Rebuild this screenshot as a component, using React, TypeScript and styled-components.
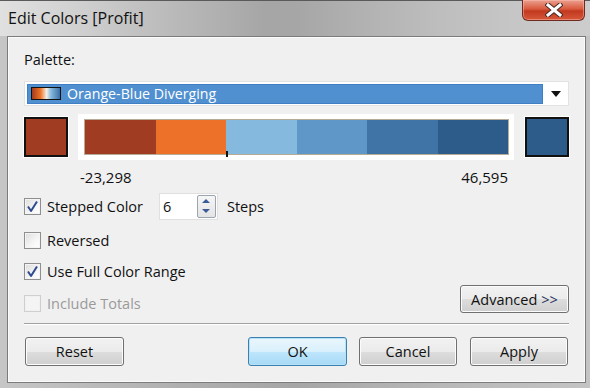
import React from "react";
import styled, { createGlobalStyle } from "styled-components";

const Global = createGlobalStyle`
  html, body { margin: 0; padding: 0; }
  body { width: 590px; height: 388px; overflow: hidden; font-family: "Open Sans", "Noto Sans", sans-serif; }
`;

const Window = styled.div`
  width: 590px;
  height: 388px;
  box-sizing: border-box;
  display: flex;
  flex-direction: column;
  background: linear-gradient(90deg, #c6c6c6 0%, #b0b0b0 30%, #a6a6a6 50%, #b8b8b8 75%, #c4c4c4 100%);
  border-top: 1px solid #5a5a5a;
`;

const TitleBar = styled.div`
  flex-shrink: 0;
  height: 35px;
  display: flex;
  align-items: flex-start;
  justify-content: space-between;
  padding: 0 5px 0 8px;
  background: linear-gradient(90deg, rgba(235,235,235,0.7) 0%, rgba(220,220,220,0.35) 22%, rgba(150,150,150,0.15) 45%, rgba(210,210,210,0.3) 80%, rgba(215,215,215,0.45) 100%);
`;

const Title = styled.div`
  font-size: 16px;
  color: #111;
  margin-top: 6px;
`;

const CloseButton = styled.div`
  width: 61px;
  height: 20px;
  margin-top: -1px;
  border: 1px solid #6e2a1e;
  border-top: none;
  border-radius: 0 0 6px 6px;
  background: linear-gradient(180deg, #eba08f 0%, #d9593f 45%, #c2391f 55%, #d7583a 100%);
  box-shadow: inset 0 0 0 1px rgba(255,200,190,0.45);
  display: flex;
  align-items: center;
  justify-content: center;
`;

const Panel = styled.div`
  flex: 1;
  min-height: 0;
  margin: 0 4px 5px 7px;
  box-sizing: border-box;
  background: #f0f0f0;
  border: 1px solid #7c7c7c;
  box-shadow: inset 0 0 0 1px #fbfbfb;
  display: flex;
  flex-direction: column;
  padding: 0 16px 0 16px;
  color: #111;
  font-size: 14px;
`;

const Label = styled.div`
  margin-top: 13px;
  height: 20px;
  line-height: 20px;
  font-size: 14.5px;
`;

const Dropdown = styled.div`
  margin-top: 11px;
  height: 25px;
  box-sizing: border-box;
  border: 1px solid #e2e2e2;
  background: #fff;
  display: flex;
  align-items: center;
  padding: 0 0 0 2px;
`;

const Selected = styled.div`
  flex: 1;
  height: 20px;
  background: #5190d0;
  border: 1px solid #3f7fc4;
  box-sizing: border-box;
  display: flex;
  align-items: center;
  color: #fff;
  font-size: 14.2px;
  gap: 6px;
  padding-left: 3px;
`;

const Swatch = styled.div`
  width: 28px;
  height: 11px;
  border: 1px solid #111;
  background: linear-gradient(90deg, #a23b1f 0%, #ee7224 30%, #f5eee6 52%, #86b8dc 68%, #3b6fa3 100%);
`;

const Arrow = styled.div`
  width: 25px;
  display: flex;
  justify-content: center;
  align-items: center;
  &::after {
    content: "";
    border-left: 5px solid transparent;
    border-right: 5px solid transparent;
    border-top: 6px solid #111;
  }
`;

const ColorRow = styled.div`
  margin-top: 8px;
  height: 46px;
  display: flex;
  align-items: center;
`;

const EndSquare = styled.div<{ $c: string }>`
  width: 44px;
  height: 40px;
  box-sizing: border-box;
  border: 2px solid #111;
  background: ${(p) => p.$c};
  outline: 1px solid #fff;
`;

const RampBox = styled.div`
  margin: 0 11px 0 10px;
  flex: 1;
  height: 46px;
  background: #fff;
  display: flex;
  align-items: center;
  padding: 0 5px 0 6px;
  box-sizing: border-box;
`;

const Ramp = styled.div`
  flex: 1;
  height: 34px;
  display: flex;
  border: 1px solid #b8ab98;
  position: relative;
`;

const Step = styled.div<{ $c: string }>`
  flex: 1;
  background: ${(p) => p.$c};
`;

const Tick = styled.div`
  position: absolute;
  left: 141px;
  bottom: -3px;
  width: 2px;
  height: 6px;
  background: #111;
`;

const RangeLabels = styled.div`
  margin: 7px 61px 0 56px;
  height: 20px;
  line-height: 20px;
  display: flex;
  justify-content: space-between;
  font-size: 15px;
`;

const CheckRow = styled.div<{ $mt: number; $disabled?: boolean }>`
  margin-top: ${(p) => p.$mt}px;
  height: 20px;
  display: flex;
  align-items: center;
  gap: 6px;
  color: ${(p) => (p.$disabled ? "#9a9a9a" : "#111")};
  font-size: 14.5px;
`;

const Box = styled.div<{ $disabled?: boolean }>`
  width: 17px;
  height: 17px;
  box-sizing: border-box;
  border: 1px solid ${(p) => (p.$disabled ? "#cfcfcf" : "#8e8f8f")};
  background: ${(p) => (p.$disabled ? "#f4f4f4" : "linear-gradient(135deg, #dcdcdc 0%, #f6f6f6 60%, #ffffff 100%)")};
  box-shadow: inset 0 0 0 1px ${(p) => (p.$disabled ? "#f0f0f0" : "#f4f4f4")};
  display: flex;
  align-items: center;
  justify-content: center;
`;

const StepsGroup = styled.div`
  display: flex;
  align-items: center;
  margin-left: 10px;
  gap: 9px;
`;

const Spin = styled.div`
  width: 59px;
  height: 27px;
  box-sizing: border-box;
  border: 1px solid #e0e0e0;
  background: #fff;
  display: flex;
  align-items: center;
  padding: 0 1px 0 3px;
`;

const SpinValue = styled.div`
  flex: 1;
  font-size: 14.5px;
`;

const SpinButtons = styled.div`
  width: 19px;
  height: 23px;
  box-sizing: border-box;
  border: 1px solid #9aa4b2;
  border-radius: 2px;
  background: linear-gradient(180deg, #f6f6f6, #e4e4e4);
  display: flex;
  flex-direction: column;
  align-items: center;
  justify-content: space-around;
`;

const Tri = styled.div<{ $up?: boolean }>`
  width: 0;
  height: 0;
  border-left: 4px solid transparent;
  border-right: 4px solid transparent;
  ${(p) => (p.$up ? "border-bottom: 4px solid #3a5a9a;" : "border-top: 4px solid #3a5a9a;")}
`;

const AdvancedRow = styled.div`
  margin-top: -28px;
  display: flex;
  justify-content: flex-end;
`;

const Separator = styled.div`
  margin-top: 10px;
  height: 1px;
  background: #a0a0a0;
  border-bottom: 1px solid #fff;
`;

const ButtonRow = styled.div`
  margin-top: 12px;
  display: flex;
  align-items: center;
`;

const Button = styled.div<{ $w: number; $h?: number; $primary?: boolean; $ml?: number }>`
  width: ${(p) => p.$w}px;
  height: ${(p) => p.$h ?? 29}px;
  box-sizing: border-box;
  margin-left: ${(p) => p.$ml ?? 0}px;
  border: 1px solid ${(p) => (p.$primary ? "#3c7fb1" : "#707070")};
  border-radius: 3px;
  background: ${(p) =>
    p.$primary
      ? "linear-gradient(180deg, #eaf6fd 0%, #d9f0fc 50%, #bee6fd 51%, #a7d9f5 100%)"
      : "linear-gradient(180deg, #f2f2f2 0%, #ebebeb 50%, #dddddd 51%, #cfcfcf 100%)"};
  box-shadow: inset 0 0 0 1px ${(p) => (p.$primary ? "#b6e2f8" : "#fcfcfc")};
  display: flex;
  align-items: center;
  justify-content: center;
  font-size: 14.5px;
  color: #111;
`;

const Chevrons = styled.span`
  color: #2a3560;
  margin-left: 4px;
`;

const steps = ["#a03c22", "#ed7128", "#85bade", "#5f97c8", "#4074a6", "#2d5b8a"];

function Check() {
  return (
    <svg width="13" height="13" viewBox="0 0 13 13">
      <path d="M2 6.5 L5 11 L11 1.5" fill="none" stroke="#2f4a8f" strokeWidth="2" strokeLinejoin="round" />
    </svg>
  );
}

export default function App() {
  return (
    <>
      <Global />
      <Window>
        <TitleBar>
          <Title>Edit Colors [Profit]</Title>
          <CloseButton>
            <svg width="18" height="14" viewBox="0 0 18 14">
              <path d="M3 2 L15 12 M15 2 L3 12" stroke="#4a2a26" strokeWidth="5" strokeLinecap="square" />
              <path d="M3 2 L15 12 M15 2 L3 12" stroke="#ffffff" strokeWidth="3" strokeLinecap="square" />
            </svg>
          </CloseButton>
        </TitleBar>
        <Panel>
          <Label>Palette:</Label>
          <Dropdown>
            <Selected>
              <Swatch />
              Orange-Blue Diverging
            </Selected>
            <Arrow />
          </Dropdown>
          <ColorRow>
            <EndSquare $c="#a03c22" />
            <RampBox>
              <Ramp>
                {steps.map((c) => (
                  <Step key={c} $c={c} />
                ))}
                <Tick />
              </Ramp>
            </RampBox>
            <EndSquare $c="#2d5b8a" />
          </ColorRow>
          <RangeLabels>
            <span>-23,298</span>
            <span>46,595</span>
          </RangeLabels>
          <CheckRow $mt={9}>
            <Box>
              <Check />
            </Box>
            Stepped Color
            <StepsGroup>
              <Spin>
                <SpinValue>6</SpinValue>
                <SpinButtons>
                  <Tri $up />
                  <Tri />
                </SpinButtons>
              </Spin>
              Steps
            </StepsGroup>
          </CheckRow>
          <CheckRow $mt={14}>
            <Box />
            Reversed
          </CheckRow>
          <CheckRow $mt={11}>
            <Box>
              <Check />
            </Box>
            Use Full Color Range
          </CheckRow>
          <CheckRow $mt={12} $disabled>
            <Box $disabled />
            Include Totals
          </CheckRow>
          <AdvancedRow>
            <Button $w={109} $h={28}>
              Advanced<Chevrons>&gt;&gt;</Chevrons>
            </Button>
          </AdvancedRow>
          <Separator />
          <ButtonRow>
            <Button $w={99} $ml={1}>Reset</Button>
            <Button $w={99} $ml={124} $primary>OK</Button>
            <Button $w={98} $ml={12}>Cancel</Button>
            <Button $w={98} $ml={13}>Apply</Button>
          </ButtonRow>
        </Panel>
      </Window>
    </>
  );
}
